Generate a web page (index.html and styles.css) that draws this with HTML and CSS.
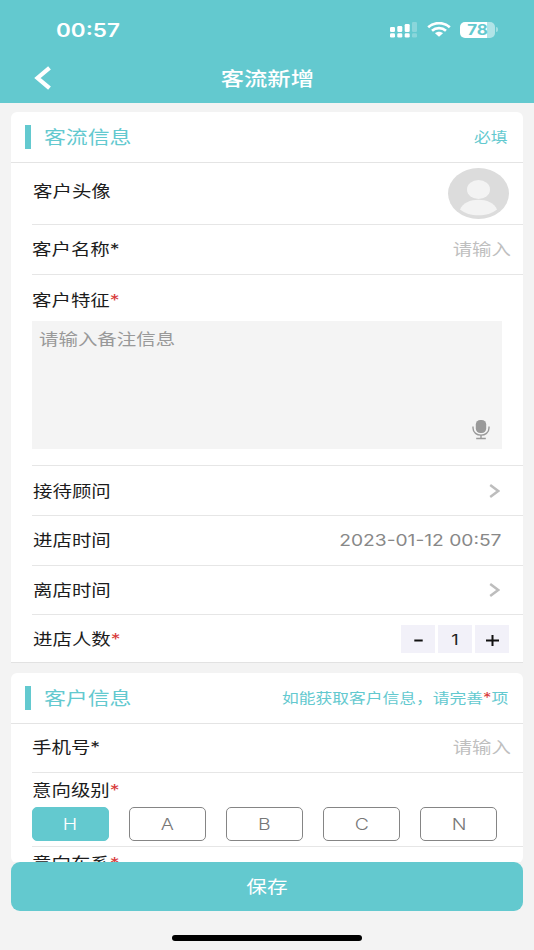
FILE: index.html
```html
<!DOCTYPE html>
<html lang="zh-CN">
<head>
<meta charset="utf-8">
<title>客流新增</title>
<link rel="stylesheet" href="styles.css">
</head>
<body>
<div class="screen">
  <header class="top">
    <div class="status">
      <span class="clock wide left">00:57</span>
      <div class="indicators">
        <svg class="signal" width="27" height="16" viewBox="0 0 27 16" fill="#fff">
          <rect x="0" y="5" width="5" height="5" rx="1.3"/><rect x="7.3" y="4" width="5" height="6" rx="1.3"/><rect x="14.7" y="2" width="5" height="8" rx="1.3"/>
          <rect x="0" y="11.3" width="5" height="4.2" rx="1.3"/><rect x="7.3" y="11.3" width="5" height="4.2" rx="1.3"/><rect x="14.7" y="11.3" width="5" height="4.2" rx="1.3"/>
          <g opacity=".25"><rect x="22" y="0" width="5" height="10" rx="1.3"/><rect x="22" y="11.3" width="5" height="4.2" rx="1.3"/></g>
        </svg>
        <svg class="wifi" width="24" height="15" viewBox="0 0 24 15" fill="none" stroke="#fff" stroke-width="2.7">
          <path d="M1.2 5.2C7.2-.2 16.8-.2 22.800 5.200"/><path d="M5 8.700C9 5.200 15 5.200 19 8.700"/>
          <path d="M8 11.300C10.300 9.300 13.700 9.300 16 11.300L12 14.700Z" fill="#fff" stroke="none"/>
        </svg>
        <div class="battery"><span class="wide">78</span></div><i class="nub"></i>
      </div>
    </div>
    <div class="nav">
      <svg class="back" width="17" height="24" viewBox="0 0 17 24" fill="none" stroke="#fff" stroke-width="4.200"><path d="M15.500 1.800L3.500 12L15.500 22.200"/></svg>
      <h1 class="wide">客流新增</h1>
    </div>
  </header>

  <main class="content">
    <section class="card">
      <div class="card-head"><i class="mark"></i><h2 class="wide left">客流信息</h2><span class="hint wide right">必填</span></div>
      <div class="rows">
        <div class="row avatar-row"><span class="label inset wide left">客户头像</span>
          <svg class="avatar" width="61" height="51" viewBox="0 0 61 51"><ellipse cx="30.500" cy="25.500" rx="30.500" ry="25.500" fill="#dcdcdc"/><ellipse cx="30.500" cy="21.500" rx="11.500" ry="9.500" fill="#f3f3f3"/><path d="M12 41.500C17 28.500 44 28.500 49 41.500C40 49.300 21 49.300 12 41.500Z" fill="#f3f3f3"/></svg>
        </div>
        <div class="row name-row"><span class="label wide left">客户名称*</span><span class="placeholder wide right">请输入</span></div>
        <div class="feature">
          <span class="label wide left">客户特征<b>*</b></span>
          <div class="note"><span class="wide left">请输入备注信息</span>
            <svg class="mic" width="18" height="20" viewBox="0 0 18 20" fill="none" stroke="#999" stroke-width="1.400"><rect x="3.800" y="0" width="10.400" height="13" rx="4.500" fill="#999" stroke="none"/><path d="M1 6.500V8C1 17.500 17 17.500 17 8V6.500M9 15V18.500M4.200 18.500H13.800"/></svg>
          </div>
        </div>
        <div class="row adviser-row"><span class="label inset wide left">接待顾问</span><svg class="chevron" width="11" height="14" viewBox="0 0 11 14"><path d="M1.200 1L9.200 7L1.200 13"/></svg></div>
        <div class="row"><span class="label inset wide left">进店时间</span><span class="date wide right">2023-01-12 00:57</span></div>
        <div class="row"><span class="label inset wide left">离店时间</span><svg class="chevron" width="11" height="14" viewBox="0 0 11 14"><path d="M1.200 1L9.200 7L1.200 13"/></svg></div>
        <div class="row last"><span class="label inset wide left">进店人数<b>*</b></span>
          <div class="stepper">
            <span><svg width="13" height="12" viewBox="0 0 13 12"><path d="M2.300 6.500H10.700"/></svg></span>
            <span class="count"><em class="wide">1</em></span>
            <span><svg width="13" height="12" viewBox="0 0 13 12"><path d="M0 6.500H13M6.500 1V12"/></svg></span>
          </div>
        </div>
      </div>
    </section>

    <section class="card customer">
      <div class="card-head"><i class="mark"></i><h2 class="wide left">客户信息</h2><span class="hint wide right">如能获取客户信息，请完善<b>*</b>项</span></div>
      <div class="rows">
        <div class="row phone-row"><span class="label wide left">手机号*</span><span class="placeholder wide right">请输入</span></div>
        <div class="level">
          <span class="label wide left">意向级别<b>*</b></span>
          <div class="options">
            <span class="option active"><em class="wide">H</em></span><span class="option"><em class="wide">A</em></span><span class="option"><em class="wide">B</em></span><span class="option"><em class="wide">C</em></span><span class="option"><em class="wide">N</em></span>
          </div>
        </div>
        <div class="series"><span class="label wide left">意向车系<b>*</b></span></div>
      </div>
    </section>
  </main>

  <footer class="bottom">
    <div class="save"><span class="wide">保存</span></div>
    <i class="home"></i>
  </footer>
</div>
</body>
</html>
```

FILE: styles.css
```css
* { box-sizing: border-box; margin: 0; padding: 0; }
body { background: #f3f3f3; color: #1c1c1c; font-family: Inter, "Noto Sans CJK SC", sans-serif; font-size: 16px; line-height: 24px; }
svg { display: block; flex: none; }
i, em { font-style: normal; }
.screen { width: 534px; height: 950px; display: flex; flex-direction: column; overflow: hidden; }

/* Horizontally expanded lettering */
.wide { display: inline-block; transform: scaleX(1.215); white-space: nowrap; }
.left { transform-origin: left center; }
.right { transform-origin: right center; }

.top { height: 103px; flex: none; background: #63c9cf; color: #fff; }
.status { height: 55px; padding: 5px 36px 0 56px; display: flex; align-items: center; justify-content: space-between; }
.clock { font-size: 18.5px; font-weight: 600; }
.indicators { display: flex; align-items: center; margin-top: -1px; }
.wifi { margin-left: 10px; }
.battery { width: 35px; height: 16px; margin-left: 9px; border-radius: 5px; background: linear-gradient(90deg, #fff 27px, #b1e4e7 27px); color: #63c9cf; font-size: 14px; font-weight: 700; line-height: 16px; text-align: center; }
.nub { width: 2px; height: 5px; margin-left: 1px; border-radius: 0 2px 2px 0; background: #a1dfe2; }
.nav { height: 48px; display: grid; grid-template-columns: 1fr auto 1fr; align-items: center; }
.back { margin: -2px 0 0 34px; }
h1 { font-size: 19.2px; font-weight: 500; line-height: 28px; }

.content { height: 759px; flex: none; padding: 9px 11px 0; overflow: hidden; }
.card { height: 551px; background: #fff; border-radius: 6px 6px 0 0; border-bottom: 1px solid #e2e2e2; }
.customer { height: 190px; margin-top: 9.5px; border: 0; border-radius: 6px; overflow: hidden; }
.card-head { height: 51px; padding: 0 15px 0 14px; display: flex; align-items: center; border-bottom: 1px solid #e4e4e4; color: #63c9cf; }
.mark { width: 6px; height: 24px; margin-right: 13px; background: #63c9cf; }
h2 { margin-top: 2px; font-size: 18px; font-weight: 400; }
.hint { margin-left: auto; font-size: 13.8px; }
b { color: #d83c3c; font-weight: 400; }
.rows { padding-left: 21px; }
.row { height: 49.5px; display: flex; align-items: center; justify-content: space-between; border-bottom: 1px solid #e6e6e6; }
.inset { margin-left: 1px; }
.avatar-row { height: 62px; padding-right: 14px; }
.avatar-row .label { margin-bottom: 5px; }
.name-row { height: 50px; }
.name-row span, .phone-row span { margin-bottom: 2px; }
.placeholder { margin-right: 12px; color: #bfbfbf; }
.feature { height: 191px; padding-top: 13px; border-bottom: 1px solid #e6e6e6; }
.feature .label { display: block; }
.note { width: 470px; height: 128px; margin: 9px 0 0; padding: 6px 12px 9px 7px; display: flex; justify-content: space-between; background: #f4f4f4; color: #999; }
.mic { align-self: flex-end; }
.adviser-row { height: 50px; }
.chevron { margin-right: 23px; fill: none; stroke: #bdbdbd; stroke-width: 2.5; }
.date { margin-right: 22px; color: #888; font-size: 15.8px; padding-top: 1px; }
.last { border: 0; height: 48px; }
.stepper { display: flex; gap: 3px; margin-right: 14px; }
.stepper > span { width: 34px; height: 28px; display: flex; align-items: center; justify-content: center; background: #f2f1f9; }
.stepper svg { margin-top: 2px; stroke: #111; stroke-width: 2; }
.count { font-size: 15px; padding-top: 1px; }
.phone-row { height: 49.5px; }
.level { height: 74px; padding-top: 4.5px; border-bottom: 1px solid #e6e6e6; }
.level .label { display: block; }
.options { display: flex; gap: 20px; margin: 5px 0 0 -0.5px; }
.option { width: 77.2px; height: 34px; display: flex; align-items: center; justify-content: center; border: 1.5px solid #858585; border-radius: 5px; color: #777; font-weight: 300; }
.active { background: #63c9cf; border-color: #63c9cf; color: #fff; }
.series { padding-top: 4px; }

.bottom { height: 88px; padding: 0 11px; }
.save { height: 49px; display: flex; align-items: center; justify-content: center; border-radius: 9px; background: #63c9cf; color: #fff; font-size: 17px; }
.home { display: block; width: 190px; height: 6px; margin: 24px auto 0; border-radius: 3px; background: #000; }
```
